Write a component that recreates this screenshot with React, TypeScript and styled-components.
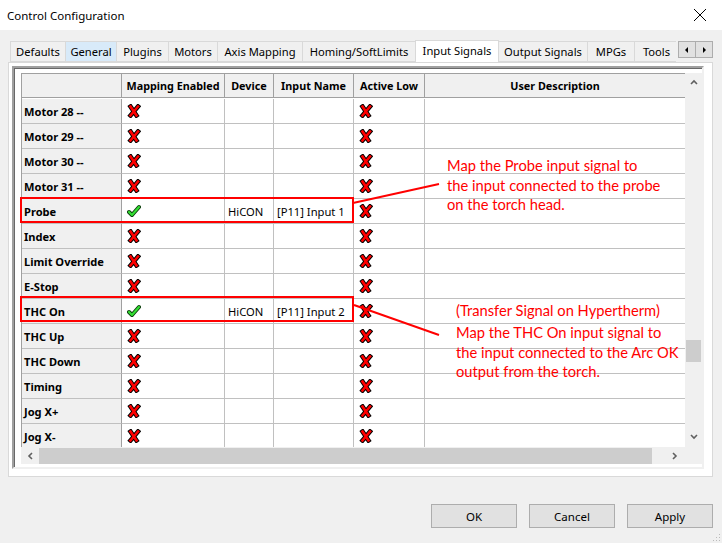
import styled, { createGlobalStyle } from 'styled-components';

const GlobalStyle = createGlobalStyle`
  html, body {
    margin: 0;
    padding: 0;
    background: #f0f0f0;
  }
  * {
    box-sizing: border-box;
  }
`;

const UI_FONT = `"Noto Sans", "Open Sans", sans-serif`;

const Window = styled.div`
  position: relative;
  width: 722px;
  height: 543px;
  background: #f0f0f0;
  font-family: ${UI_FONT};
  font-size: 11px;
  color: #000;
  overflow: hidden;
  display: flex;
  flex-direction: column;
`;

const TitleBar = styled.div`
  height: 30px;
  background: #fff;
  display: flex;
  align-items: center;
  justify-content: space-between;
  padding: 0 15px 0 7px;
  font-size: 11.5px;
`;

const Body = styled.div`
  padding: 10px 9px 0 8px;
  display: flex;
  flex-direction: column;
`;

const TabRow = styled.div`
  display: flex;
  align-items: flex-start;
  height: 22px;
  margin-left: 2px;
`;

const TabStrip = styled.div`
  display: flex;
  align-items: flex-end;
  width: 666px;
  height: 22px;
  overflow: hidden;
  position: relative;
  z-index: 2;
`;

const Tab = styled.div<{ $w: number; $active?: boolean; $hover?: boolean }>`
  flex: none;
  width: ${(p) => p.$w + 1}px;
  height: ${(p) => (p.$active ? 23 : 21)}px;
  margin-right: -1px;
  margin-bottom: ${(p) => (p.$active ? -1 : 0)}px;
  border: 1px solid #d9d9d9;
  border-bottom: ${(p) => (p.$active ? 'none' : '1px solid #d9d9d9')};
  background: ${(p) => (p.$active ? '#fff' : p.$hover ? '#d8eaf9' : '#f0f0f0')};
  position: relative;
  z-index: ${(p) => (p.$active ? 2 : 1)};
  display: flex;
  align-items: ${(p) => (p.$active ? 'flex-start' : 'center')};
  padding-top: ${(p) => (p.$active ? 2 : 0)}px;
  justify-content: center;
  white-space: nowrap;
  font-size: 11.2px;
`;

const Spinner = styled.div`
  display: flex;
  margin-left: 2px;
  margin-top: 1px;
`;

const SpinButton = styled.div`
  width: 18px;
  height: 17px;
  border: 1px solid #adadad;
  background: #e1e1e1;
  margin-right: -1px;
  display: flex;
  align-items: center;
  justify-content: center;
`;

const TabPanel = styled.div`
  width: 705px;
  height: 415px;
  border: 1px solid #d9d9d9;
  background: #fff;
  padding: 3px 0 0 3px;
  position: relative;
  z-index: 1;
`;

const GridFrame = styled.div`
  width: 692px;
  height: 403px;
  border-top: 2px solid #a0a0a0;
  border-left: 2px solid #a0a0a0;
  border-right: 2px solid #f0f0f0;
  border-bottom: 2px solid #f0f0f0;
  box-shadow: inset 1px 1px 0 #696969;
  background: #fff;
  padding: 5px 0 3px 7px;
  display: flex;
  flex-direction: column;
`;

const GridArea = styled.div`
  display: flex;
  height: 374px;
`;

const TableClip = styled.div`
  width: 664px;
  height: 374px;
  overflow: hidden;
`;

const Table = styled.div`
  display: grid;
  grid-template-columns: 100px 103px 49px 80px 71px 261px;
  grid-auto-rows: 25px;
  grid-template-rows: 25px;
  border-left: 1px solid #a0a0a0;
  border-top: 1px solid #a0a0a0;
  width: 664px;
`;

const HeadCell = styled.div`
  background: #f0f0f0;
  border-right: 1px solid #a0a0a0;
  border-bottom: 1px solid #a0a0a0;
  font-weight: 700;
  font-size: 10.8px;
  display: flex;
  align-items: center;
  justify-content: center;
  white-space: nowrap;
  height: 24px;
`;

const RowHead = styled.div`
  background: #f0f0f0;
  border-right: 1px solid #a0a0a0;
  border-bottom: 1px solid #c0c0c0;
  font-weight: 700;
  font-size: 11.1px;
  display: flex;
  align-items: center;
  padding-left: 2px;
  white-space: nowrap;
`;

const Cell = styled.div<{ $icon?: boolean }>`
  background: #fff;
  border-right: 1px solid #c0c0c0;
  border-bottom: 1px solid #c0c0c0;
  display: flex;
  align-items: center;
  padding-left: ${(p) => (p.$icon ? 5 : 3)}px;
  white-space: nowrap;
  font-size: 11.2px;
`;

const VScroll = styled.div`
  width: 17px;
  height: 374px;
  background: #f0f0f0;
  position: relative;
  display: flex;
  flex-direction: column;
  justify-content: space-between;
  align-items: center;
  padding: 6px 0;
`;

const VThumb = styled.div`
  position: absolute;
  left: 1px;
  top: 267px;
  width: 15px;
  height: 22px;
  background: #cdcdcd;
`;

const HScrollRow = styled.div`
  display: flex;
  height: 17px;
`;

const HScroll = styled.div`
  width: 664px;
  height: 17px;
  background: #f0f0f0;
  display: flex;
  align-items: center;
  justify-content: space-between;
  padding: 0 6px;
`;

const HThumb = styled.div`
  width: 613px;
  height: 16px;
  background: #cdcdcd;
  margin-left: 4px;
  margin-right: auto;
`;

const Corner = styled.div`
  width: 17px;
  height: 17px;
  background: #f0f0f0;
`;

const Footer = styled.div`
  display: flex;
  justify-content: flex-end;
  gap: 12px;
  margin-top: 27px;
`;

const Button = styled.div`
  width: 86px;
  height: 24px;
  background: #e1e1e1;
  border: 1px solid #adadad;
  display: flex;
  align-items: center;
  justify-content: center;
  font-size: 11.5px;
`;

const Overlay = styled.div`
  position: absolute;
  inset: 0;
  pointer-events: none;
  z-index: 10;
`;

const RedBox = styled.div<{ $top: number }>`
  position: absolute;
  left: 20px;
  top: ${(p) => p.$top}px;
  width: 334px;
  height: 26px;
  border: 2px solid #ff0000;
`;

const Note = styled.div<{ $left: number; $top: number }>`
  position: absolute;
  left: ${(p) => p.$left}px;
  top: ${(p) => p.$top}px;
  font-family: Lato, "Liberation Sans", sans-serif;
  font-size: 14.7px;
  line-height: 19.5px;
  color: #ff0000;
  white-space: nowrap;
`;

const Grip = styled.svg`
  position: absolute;
  right: 1px;
  bottom: 1px;
`;

const XIcon = () => (
  <svg width="14" height="14" viewBox="0 0 14 14">
    <path d="M3.5 2.5 L9.5 11.5 M11 2.5 L3.5 11.5" stroke="#000" strokeWidth="4.5" strokeLinecap="square" />
    <path d="M3.5 2.5 L9.5 11.5 M11 2.5 L3.5 11.5" stroke="#ff0000" strokeWidth="2.6" strokeLinecap="square" />
  </svg>
);

const CheckIcon = () => (
  <svg width="14" height="14" viewBox="0 0 14 14">
    <path d="M2 8 L5 11 L12 3" fill="none" stroke="#0a3a0a" strokeWidth="4" strokeLinecap="round" strokeLinejoin="round" />
    <path d="M2 8 L5 11 L12 3" fill="none" stroke="#33dd33" strokeWidth="2.2" strokeLinecap="round" strokeLinejoin="round" />
  </svg>
);

const Chevron = ({ dir }: { dir: 'up' | 'down' | 'left' | 'right' }) => {
  const pts = {
    up: '1,5 4,2 7,5',
    down: '1,2 4,5 7,2',
    left: '5,1 2,4 5,7',
    right: '2,1 5,4 2,7',
  }[dir];
  return (
    <svg width="8" height="8" viewBox="0 0 8 8">
      <polyline points={pts} fill="none" stroke="#606060" strokeWidth="1.6" />
    </svg>
  );
};

const Triangle = ({ dir }: { dir: 'left' | 'right' }) => (
  <svg width="6" height="8" viewBox="0 0 6 8">
    <polygon points={dir === 'left' ? '4,1 1,4 4,7' : '2,1 5,4 2,7'} fill="#000" />
  </svg>
);

const tabs = [
  { label: 'Defaults', w: 55 },
  { label: 'General', w: 51, hover: true },
  { label: 'Plugins', w: 52 },
  { label: 'Motors', w: 49 },
  { label: 'Axis Mapping', w: 85 },
  { label: 'Homing/SoftLimits', w: 113 },
  { label: 'Input Signals', w: 83, active: true },
  { label: 'Output Signals', w: 89 },
  { label: 'MPGs', w: 47 },
  { label: 'Tools', w: 44 },
];

const columns = ['', 'Mapping Enabled', 'Device', 'Input Name', 'Active Low', 'User Description'];

type Row = { name: string; enabled?: boolean; device?: string; input?: string };

const rows: Row[] = [
  { name: 'Motor 28 --' },
  { name: 'Motor 29 --' },
  { name: 'Motor 30 --' },
  { name: 'Motor 31 --' },
  { name: 'Probe', enabled: true, device: 'HiCON', input: '[P11] Input 1' },
  { name: 'Index' },
  { name: 'Limit Override' },
  { name: 'E-Stop' },
  { name: 'THC On', enabled: true, device: 'HiCON', input: '[P11] Input 2' },
  { name: 'THC Up' },
  { name: 'THC Down' },
  { name: 'Timing' },
  { name: 'Jog X+' },
  { name: 'Jog X-' },
];

export default function App() {
  return (
    <Window>
      <GlobalStyle />
      <TitleBar>
        <span>Control Configuration</span>
        <svg width="14" height="14" viewBox="0 0 14 14">
          <path d="M1 1 L13 13 M13 1 L1 13" stroke="#000" strokeWidth="1" />
        </svg>
      </TitleBar>
      <Body>
        <TabRow>
          <TabStrip>
            {tabs.map((t) => (
              <Tab key={t.label} $w={t.w} $active={t.active} $hover={t.hover}>
                {t.label}
              </Tab>
            ))}
          </TabStrip>
          <Spinner>
            <SpinButton>
              <Triangle dir="left" />
            </SpinButton>
            <SpinButton>
              <Triangle dir="right" />
            </SpinButton>
          </Spinner>
        </TabRow>
        <TabPanel>
          <GridFrame>
            <GridArea>
              <TableClip>
                <Table>
                  {columns.map((c, i) => (
                    <HeadCell key={i}>{c}</HeadCell>
                  ))}
                  {rows.map((r) => [
                    <RowHead key={r.name + 'h'}>{r.name}</RowHead>,
                    <Cell key={r.name + 'm'} $icon>
                      {r.enabled ? <CheckIcon /> : <XIcon />}
                    </Cell>,
                    <Cell key={r.name + 'd'}>{r.device}</Cell>,
                    <Cell key={r.name + 'i'}>{r.input}</Cell>,
                    <Cell key={r.name + 'a'} $icon>
                      <XIcon />
                    </Cell>,
                    <Cell key={r.name + 'u'} />,
                  ])}
                </Table>
              </TableClip>
              <VScroll>
                <Chevron dir="up" />
                <VThumb />
                <Chevron dir="down" />
              </VScroll>
            </GridArea>
            <HScrollRow>
              <HScroll>
                <Chevron dir="left" />
                <HThumb />
                <Chevron dir="right" />
              </HScroll>
              <Corner />
            </HScrollRow>
          </GridFrame>
        </TabPanel>
        <Footer>
          <Button>OK</Button>
          <Button>Cancel</Button>
          <Button>Apply</Button>
        </Footer>
      </Body>

      <Overlay>
        <RedBox $top={197} />
        <RedBox $top={296} />
        <svg width="722" height="543" style={{ position: 'absolute', left: 0, top: 0 }}>
          <line x1="353" y1="203" x2="439" y2="184" stroke="#ff0000" strokeWidth="2" />
          <line x1="354" y1="305" x2="439" y2="335" stroke="#ff0000" strokeWidth="2" />
        </svg>
        <Note $left={447} $top={156}>
          Map the Probe input signal to
          <br />
          the input connected to the probe
          <br />
          on the torch head.
        </Note>
        <Note $left={456} $top={301}>
          (Transfer Signal on Hypertherm)
        </Note>
        <Note $left={456} $top={323}>
          Map the THC On input signal to
          <br />
          the input connected to the Arc OK
          <br />
          output from the torch.
        </Note>
      </Overlay>
      <Grip width="8" height="8" viewBox="0 0 8 8">
        <rect x="6" y="0" width="1" height="1" fill="#bbb" />
        <rect x="3" y="3" width="1" height="1" fill="#bbb" />
        <rect x="6" y="3" width="1" height="1" fill="#bbb" />
        <rect x="0" y="6" width="1" height="1" fill="#bbb" />
        <rect x="3" y="6" width="1" height="1" fill="#bbb" />
        <rect x="6" y="6" width="1" height="1" fill="#bbb" />
      </Grip>
    </Window>
  );
}
